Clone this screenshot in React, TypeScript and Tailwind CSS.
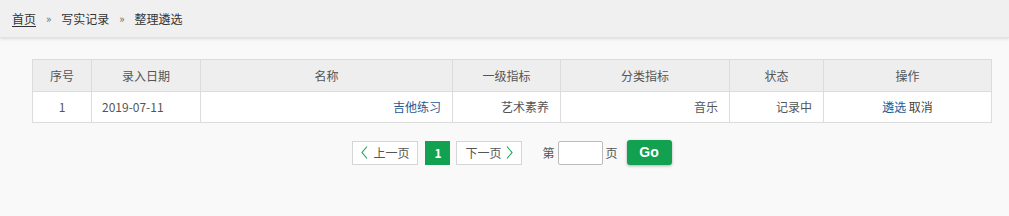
const font = { fontFamily: '"Noto Sans CJK SC", "Liberation Sans", sans-serif' };

function Chevron({ dir }: { dir: 'left' | 'right' }) {
  return (
    <svg width="7" height="13" viewBox="0 0 7 13" fill="none" stroke="#16a05a" strokeWidth="1.1">
      {dir === 'left' ? <polyline points="6,0.5 1,6.5 6,12.5" /> : <polyline points="1,0.5 6,6.5 1,12.5" />}
    </svg>
  );
}

export default function App() {
  return (
    <div className="min-h-[216px] bg-[#f9f9f9] text-[12px] text-[#333]" style={font}>
      {/* Breadcrumb */}
      <div className="h-[38px] bg-[#f0f0f0] flex items-center pl-[12px] shadow-[0_1px_3px_rgba(0,0,0,0.12)] border-b border-[#e2e2e2]">
        <a className="underline text-[#333] underline-offset-2">首页</a>
        <span className="mx-[10px] text-[#666] text-[11px]">»</span>
        <span>写实记录</span>
        <span className="mx-[10px] text-[#666] text-[11px]">»</span>
        <span>整理遴选</span>
      </div>

      {/* Table */}
      <div className="ml-[32px] mt-[21px] w-[960px]">
        <table className="w-full border-collapse text-[12px] text-[#555] table-fixed">
          <colgroup>
            <col className="w-[59px]" />
            <col className="w-[109px]" />
            <col className="w-[252px]" />
            <col className="w-[108px]" />
            <col className="w-[169px]" />
            <col className="w-[94px]" />
            <col />
          </colgroup>
          <thead>
            <tr className="h-[32px] bg-[#eeeeee]">
              {['序号', '录入日期', '名称', '一级指标', '分类指标', '状态', '操作'].map((h) => (
                <th key={h} className="border border-[#dcdcdc] font-normal text-center">{h}</th>
              ))}
            </tr>
          </thead>
          <tbody>
            <tr className="h-[31px] bg-white">
              <td className="border border-[#dcdcdc] text-center">1</td>
              <td className="border border-[#dcdcdc] pl-[10px]">2019-07-11</td>
              <td className="border border-[#dcdcdc] text-right pr-[11px]"><a className="text-[#1e5a96]">吉他练习</a></td>
              <td className="border border-[#dcdcdc] text-right pr-[11px]">艺术素养</td>
              <td className="border border-[#dcdcdc] text-right pr-[11px]">音乐</td>
              <td className="border border-[#dcdcdc] text-right pr-[11px]">记录中</td>
              <td className="border border-[#dcdcdc] text-center">
                <a className="text-[#1e5a96]">遴选</a> <a className="text-[#444]">取消</a>
              </td>
            </tr>
          </tbody>
        </table>

        {/* Pagination */}
        <div className="flex items-center justify-center mt-[17px] text-[#555]">
          <div className="flex items-center">
            <button className="h-[24px] w-[66px] border border-[#d5d5d5] bg-white flex items-center justify-center gap-[5px]">
              <Chevron dir="left" />
              <span>上一页</span>
            </button>
            <span className="ml-[7px] h-[24px] w-[25px] bg-[#12a150] text-white flex items-center justify-center font-semibold">1</span>
            <button className="ml-[6px] h-[24px] w-[66px] border border-[#d5d5d5] bg-white flex items-center justify-center gap-[5px]">
              <span>下一页</span>
              <Chevron dir="right" />
            </button>
            <span className="ml-[20px]">第</span>
            <input className="ml-[3px] h-[24px] w-[45px] border border-[#bbb] bg-white rounded-[2px] outline-none" />
            <span className="ml-[3px]">页</span>
            <button className="ml-[9px] h-[25px] w-[45px] rounded-[3px] bg-[#12a150] text-white font-bold text-[14px] shadow-[0_1px_3px_rgba(0,0,0,0.3)]" style={{ fontFamily: '"Liberation Sans", sans-serif' }}>Go</button>
          </div>
        </div>
      </div>
    </div>
  );
}
